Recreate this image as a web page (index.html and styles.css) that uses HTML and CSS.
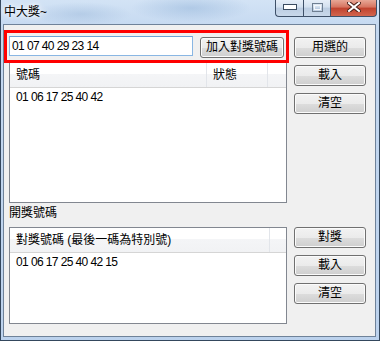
FILE: index.html
```html
<!DOCTYPE html>
<html lang="zh-Hant">
<head>
    <meta charset="UTF-8">
    <title>中大獎~</title>
    <link rel="stylesheet" href="styles.css">
</head>
<body>

<div class="window">
    <div class="titlebar">
        <span class="title">中大獎~</span>
        <div class="caption">
            <span class="cap-btn cap-min">
                <svg width="14" height="6" viewBox="0 0 14 6"><rect x="0.5" y="0.5" width="13" height="5" fill="#fff" stroke="#3a4b60"/></svg>
            </span>
            <span class="cap-btn cap-max">
                <svg width="11" height="9" viewBox="0 0 11 9"><rect x="0.5" y="0.5" width="10" height="8" fill="none" stroke="#6f7f92"/><rect x="2.5" y="2.5" width="6" height="4" fill="none" stroke="#f4f7fb"/></svg>
            </span>
            <span class="cap-btn cap-close">
                <svg width="14" height="10" viewBox="0 0 14 10"><path d="M2 1 L12 9 M12 1 L2 9" stroke="#4a2018" stroke-width="4" stroke-linecap="square"/><path d="M2 1 L12 9 M12 1 L2 9" stroke="#fff" stroke-width="2" stroke-linecap="square"/></svg>
            </span>
        </div>
    </div>

    <div class="frame">
        <div class="client">
            <div class="top-block">
                <div class="mark">
                    <input class="num-input num" type="text" value="01 07 40 29 23 14">
                    <button class="btn btn-add">加入對獎號碼</button>
                </div>
                <div class="list list-top">
                    <div class="list-head">
                        <span class="col col-num">號碼</span>
                        <span class="col col-state">狀態</span>
                        <span class="col col-fill"></span>
                    </div>
                    <div class="list-row num">01 06 17 25 40 42</div>
                </div>
            </div>
            <div class="side side-top">
                <button class="btn">用選的</button>
                <button class="btn">載入</button>
                <button class="btn">清空</button>
            </div>

            <div class="section-label">開獎號碼</div>
            <div></div>

            <div class="list list-bottom">
                <div class="list-head">
                    <span class="col col-win">對獎號碼 (最後一碼為特別號)</span>
                    <span class="col col-fill"></span>
                </div>
                <div class="list-row num">01 06 17 25 40 42 15</div>
            </div>
            <div class="side">
                <button class="btn">對獎</button>
                <button class="btn">載入</button>
                <button class="btn">清空</button>
            </div>
        </div>
    </div>
</div>

</body>
</html>
```

FILE: styles.css
```css
* {
    box-sizing: border-box;
}

body {
    margin: 0;
    font-family: "Liberation Sans", "Noto Sans CJK TC", sans-serif;
    font-size: 12px;
    color: #000;
    background: #fff;
}

.window {
    width: 380px;
    height: 341px;
    border: 1px solid #34475d;
    border-top: 0;
    background:
        radial-gradient(ellipse 60px 14px at 190px 8px, rgba(120, 160, 205, 0.35), transparent),
        radial-gradient(ellipse 50px 12px at 80px 14px, rgba(130, 165, 205, 0.3), transparent),
        linear-gradient(#d3e3f5, #c4d8f0 30px, #bcd2ed);
    display: flex;
    flex-direction: column;
}

/* title bar */
.titlebar {
    height: 24px;
    display: flex;
    justify-content: space-between;
    align-items: flex-start;
}

.title {
    padding: 5px 0 0 3px;
    line-height: 14px;
    text-shadow: 0 0 5px #fff, 0 0 8px #fff;
}

.caption {
    display: flex;
    margin-right: 2px;
}

.cap-btn {
    height: 17px;
    display: flex;
    align-items: center;
    justify-content: center;
    border: 1px solid #3e5068;
    border-top: 0;
    padding-bottom: 2px;
}

.cap-min {
    width: 28px;
    border-right: 0;
    border-bottom-left-radius: 4px;
    background: linear-gradient(#e6eef8, #d3e0ef 45%, #bccde2 50%, #c9d8ea);
}

.cap-max {
    width: 27px;
    border-right: 0;
    background: linear-gradient(#e6eef8, #d3e0ef 45%, #bccde2 50%, #c9d8ea);
}

.cap-close {
    width: 47px;
    border-bottom-right-radius: 4px;
    background: linear-gradient(#e8a796, #d6735f 45%, #c0412d 50%, #d2654e);
}

/* client area */
.frame {
    flex: 1;
    padding: 0 3px 3px 2px;
    display: flex;
}

.client {
    flex: 1;
    border: 1px solid #6f8299;
    background: #f0f0f0;
    padding: 5px 8px 0 5px;
    display: grid;
    grid-template-columns: 278px 72px;
    column-gap: 7px;
    align-content: start;
    align-items: start;
}

.mark {
    position: relative;
    z-index: 1;
    height: 33px;
    margin: 0 -2px 0 -5px;
    border: 3px solid #f00;
    padding: 3px 2px 0 2px;
    display: flex;
    gap: 7px;
    align-items: flex-start;
}

.num {
    font-family: "Liberation Sans", sans-serif;
    letter-spacing: -0.6px;
}

.num-input {
    width: 184px;
    height: 20px;
    border: 1px solid #89b6e3;
    border-top-color: #6da2d6;
    padding: 0 2px;
    font-size: 12px;
    color: #000;
    background: #fff;
    outline: none;
}

.btn {
    height: 21px;
    width: 72px;
    border: 1px solid #707070;
    border-radius: 3px;
    padding: 0;
    font-family: "Liberation Sans", "Noto Sans CJK TC", sans-serif;
    font-size: 12px;
    line-height: 17px;
    color: #000;
    background: linear-gradient(#f2f2f2, #ebebeb 50%, #dddddd 51%, #cfcfcf);
    box-shadow: inset 0 0 0 1px #fbfbfb;
}

.btn-add {
    width: 84px;
    margin-top: 1px;
}

/* list views */
.list {
    border: 1px solid #828790;
    background: #fff;
}

.list-top {
    margin-top: -1px;
    height: 141px;
}

.list-bottom {
    height: 97px;
}

.list-head {
    height: 25px;
    display: flex;
    border-bottom: 1px solid #d5d5d5;
    background: linear-gradient(#fff, #fff 45%, #f4f5f7 46%, #f1f2f4);
}

.col {
    padding: 4px 0 0 6px;
    line-height: 16px;
    border-right: 1px solid #e2e5ea;
    white-space: nowrap;
}

.col-num {
    width: 197px;
}

.col-state {
    width: 61px;
}

.col-win {
    width: 260px;
}

.col-fill {
    flex: 1;
    border-right: 0;
}

.list-row {
    height: 18px;
    line-height: 18px;
    padding-left: 6px;
}

.section-label {
    height: 24px;
    line-height: 20px;
}

.side {
    display: flex;
    flex-direction: column;
    gap: 7px;
}

.side-top {
    padding-top: 7px;
}
```
